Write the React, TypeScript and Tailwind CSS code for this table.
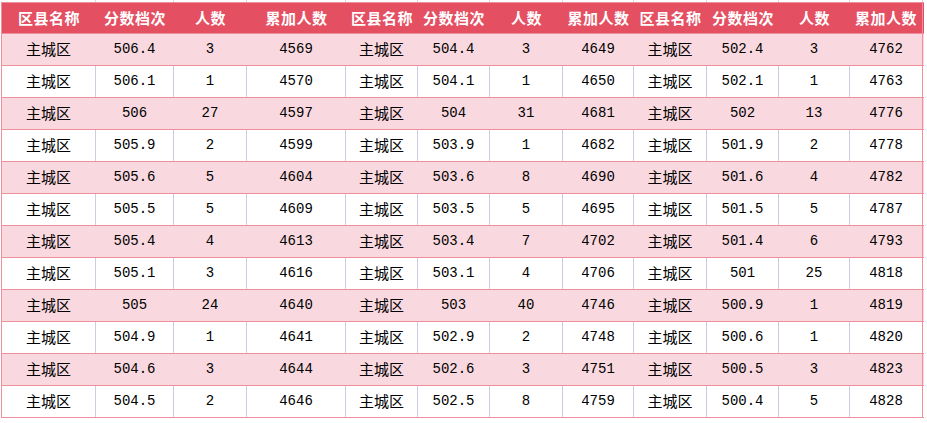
const W = [94, 78, 73, 99, 72, 72, 73, 71, 73, 72, 71, 73]

const blocks: [string, string, string][][] = [
  [
    ['506.4', '3', '4569'], ['506.1', '1', '4570'], ['506', '27', '4597'], ['505.9', '2', '4599'],
    ['505.6', '5', '4604'], ['505.5', '5', '4609'], ['505.4', '4', '4613'], ['505.1', '3', '4616'],
    ['505', '24', '4640'], ['504.9', '1', '4641'], ['504.6', '3', '4644'], ['504.5', '2', '4646'],
  ],
  [
    ['504.4', '3', '4649'], ['504.1', '1', '4650'], ['504', '31', '4681'], ['503.9', '1', '4682'],
    ['503.6', '8', '4690'], ['503.5', '5', '4695'], ['503.4', '7', '4702'], ['503.1', '4', '4706'],
    ['503', '40', '4746'], ['502.9', '2', '4748'], ['502.6', '3', '4751'], ['502.5', '8', '4759'],
  ],
  [
    ['502.4', '3', '4762'], ['502.1', '1', '4763'], ['502', '13', '4776'], ['501.9', '2', '4778'],
    ['501.6', '4', '4782'], ['501.5', '5', '4787'], ['501.4', '6', '4793'], ['501', '25', '4818'],
    ['500.9', '1', '4819'], ['500.6', '1', '4820'], ['500.5', '3', '4823'], ['500.4', '5', '4828'],
  ],
]

const headers = ['区县名称', '分数档次', '人数', '累加人数']

const cjk = { fontFamily: '"Noto Sans CJK SC", sans-serif' }
const mono = { fontFamily: '"Liberation Mono", monospace' }

export default function App() {
  const rows = blocks[0].map((_, i) => blocks.flatMap((b) => ['主城区', ...b[i]]))

  return (
    <div className="w-[927px] h-[423px] bg-white overflow-hidden">
      <div className="h-[2px] flex ml-[1px]">
        <div className="w-[1px]" />
        {W.map((w, i) => (
          <div key={i} style={{ width: w }} className="border-r border-[#d4d9e6]" />
        ))}
      </div>
      <div className="ml-[1px] w-[923px] border-l border-t border-[#ee8f9b]">
        {/* header */}
        <div className="flex h-[31px] bg-[#e44f62] border-b border-[#ee8f9b]">
          {W.map((w, i) => (
            <div
              key={i}
              style={{ width: w, ...cjk }}
              className={`flex items-center justify-center text-white font-bold text-[15px] tracking-[0.5px] ${i === W.length - 1 ? 'border-r border-[#ee8f9b]' : ''}`}
            >
              {headers[i % 4]}
            </div>
          ))}
        </div>
        {rows.map((cells, r) => {
          const pink = r % 2 === 0
          return (
            <div
              key={r}
              className={`flex h-[32px] border-b border-[#ee8f9b] ${pink ? 'bg-[#f9d9df]' : 'bg-white'}`}
            >
              {cells.map((c, i) => {
                const last = i === W.length - 1
                const border = last ? 'border-r border-[#ee8f9b]' : pink ? 'border-r border-[#f9d9df]' : 'border-r border-[#c9cfe0]'
                return (
                  <div
                    key={i}
                    style={{ width: W[i], ...(i % 4 === 0 ? cjk : mono) }}
                    className={`flex items-center justify-center text-black ${i % 4 === 0 ? 'text-[15px]' : 'text-[14px]'} ${border}`}
                  >
                    {c}
                  </div>
                )
              })}
            </div>
          )
        })}
      </div>
    </div>
  )
}
